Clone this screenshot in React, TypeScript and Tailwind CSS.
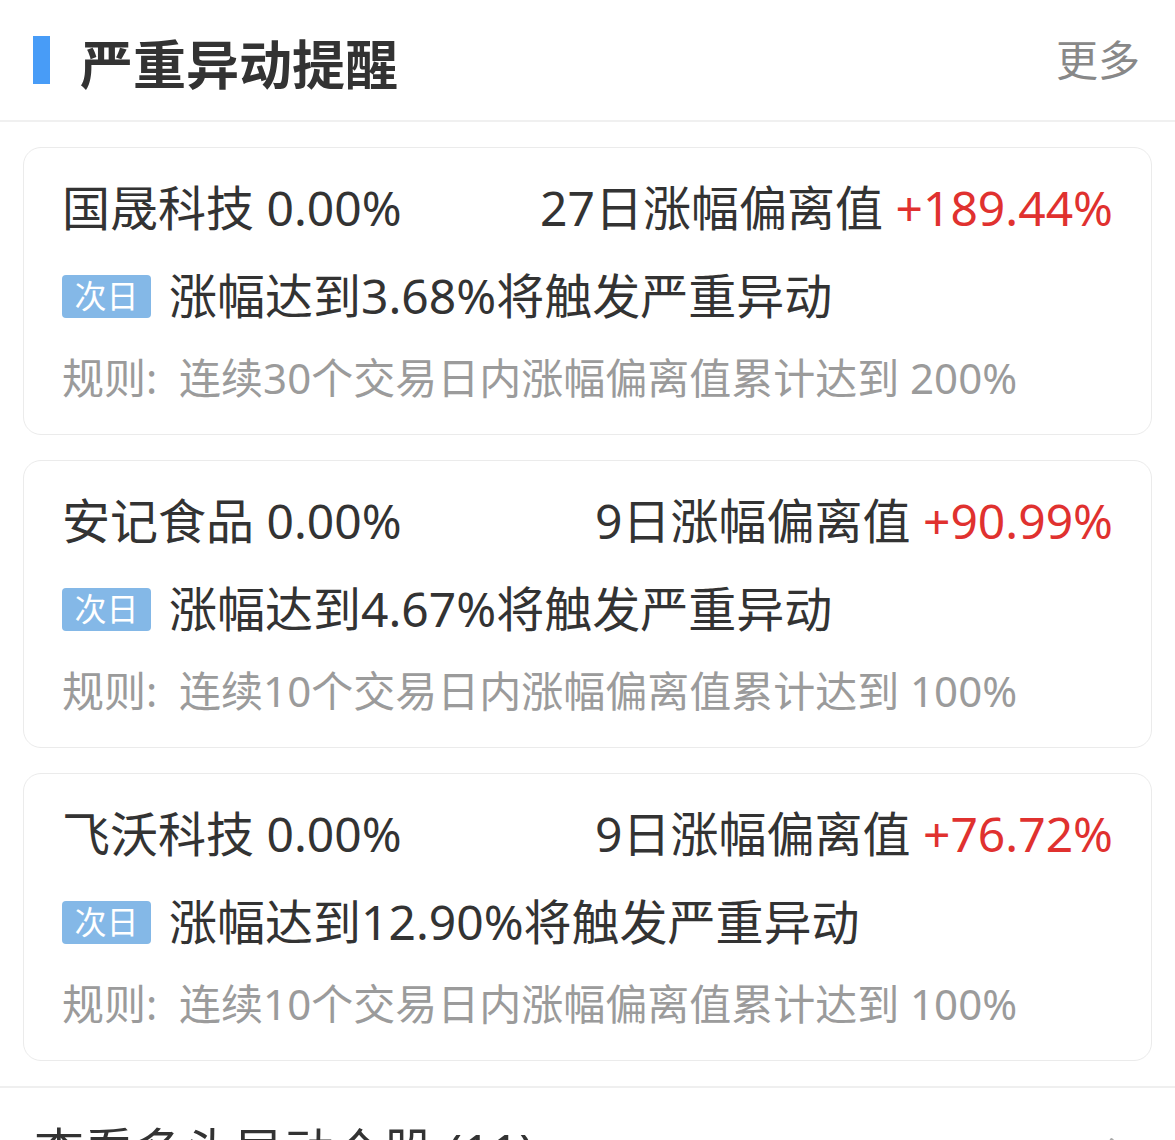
import { ChevronRight } from 'lucide-react';

const FONT = { fontFamily: "'Noto Sans', 'Noto Sans CJK SC', sans-serif" };

const alerts = [
  { name: '国晟科技', chg: '0.00%', days: 27, dev: '+189.44%', next: '3.68%', rule: '连续30个交易日内涨幅偏离值累计达到 200%' },
  { name: '安记食品', chg: '0.00%', days: 9, dev: '+90.99%', next: '4.67%', rule: '连续10个交易日内涨幅偏离值累计达到 100%' },
  { name: '飞沃科技', chg: '0.00%', days: 9, dev: '+76.72%', next: '12.90%', rule: '连续10个交易日内涨幅偏离值累计达到 100%' },
];

function AlertCard({ a }: any) {
  return (
    <div className="rounded-[18px] border border-[#ebebeb] bg-white px-[38px] pt-[32px] pb-[31px]">
      {/* 名称 + 偏离值 */}
      <div className="flex h-[56px] items-center justify-between text-[48px] leading-[56px] text-[#333]">
        <span className="whitespace-nowrap">
          {a.name} {a.chg}
        </span>
        <span className="whitespace-nowrap">
          {a.days}日涨幅偏离值 <span className="text-[#e0312f]">{a.dev}</span>
        </span>
      </div>

      {/* 次日触发条件 */}
      <div className="mt-[32px] flex h-[56px] items-center text-[48px] leading-[56px] text-[#333]">
        <span className="mr-[18px] flex h-[43px] w-[89px] items-center justify-center rounded-[4px] bg-[#84b8e7] text-[32px] leading-none text-white">
          次日
        </span>
        <span className="whitespace-nowrap">涨幅达到{a.next}将触发严重异动</span>
      </div>

      {/* 规则 */}
      <div className="mt-[29px] h-[50px] whitespace-nowrap text-[42px] leading-[50px] text-[#9b9b9b]">
        规则:{'\u00a0\u00a0'}{a.rule}
      </div>
    </div>
  );
}

export default function App() {
  return (
    <div className="min-h-[1140px] w-[1175px] overflow-hidden bg-white" style={FONT}>
      {/* 标题栏 */}
      <div className="flex h-[122px] items-center justify-between border-b-2 border-[#f0f0f0] pl-[33px] pr-[35px]">
        <div className="flex items-center">
          <div className="h-[48px] w-[17px] bg-[#489cf7]" />
          <h2 className="ml-[30px] pt-[8px] text-[53px] font-bold leading-none text-[#333]">严重异动提醒</h2>
        </div>
        <span className="text-[42px] leading-none text-[#888]">更多</span>
      </div>

      {/* 列表 */}
      <div className="flex flex-col gap-[25px] border-b-2 border-[#efefef] px-[23px] pt-[25px] pb-[25px]">
        {alerts.map((a) => (
          <AlertCard key={a.name} a={a} />
        ))}
      </div>

      {/* 底部入口 */}
      <div className="flex items-center justify-between pl-[34px] pr-[36px] pt-[28px]">
        <span className="text-[50px] leading-[70px] text-[#333]">查看多头异动个股 (11)</span>
        <ChevronRight className="h-[44px] w-[44px] text-[#aaa]" strokeWidth={2} />
      </div>
    </div>
  );
}
